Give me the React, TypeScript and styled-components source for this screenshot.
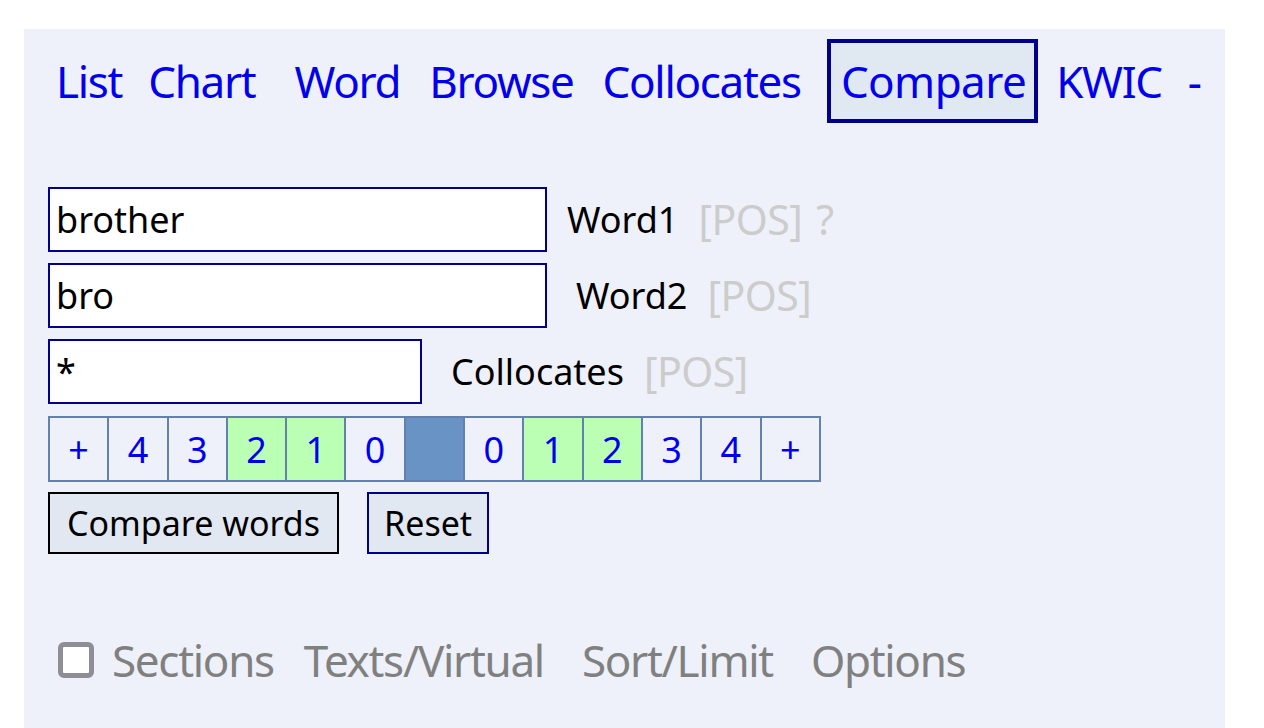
import React from "react";
import styled, { createGlobalStyle } from "styled-components";

const GlobalStyle = createGlobalStyle`
  html, body { margin: 0; padding: 0; background: #ffffff; }
  body { font-family: "Noto Sans", "Open Sans", sans-serif; }
  * { box-sizing: border-box; }
`;

const Panel = styled.div`
  margin: 29px 0 0 24px;
  width: 1201px;
  height: 699px;
  background: #eef1f9;
  padding-top: 10px;
`;

const Nav = styled.nav`
  display: flex;
  align-items: center;
  height: 84px;
  padding-left: 19px;
`;

const NavLink = styled.a<{ $active?: boolean; $extra?: number }>`
  display: flex;
  align-items: center;
  height: 84px;
  padding: ${(p) => (p.$active ? "0 8px 0 10px" : "0 9px")};
  margin-left: ${(p) => p.$extra ?? 0}px;
  border: 4px solid ${(p) => (p.$active ? "#00008b" : "transparent")};
  background: ${(p) => (p.$active ? "#e0e8f2" : "transparent")};
  color: #0000ee;
  font-size: 44px;
  letter-spacing: ${(p) => (p.$active ? "-0.6px" : "-1.3px")};
  text-decoration: none;
  white-space: nowrap;
  line-height: 1;
`;

const Form = styled.div`
  padding-left: 24px;
  margin-top: 64px;
  display: flex;
  flex-direction: column;
`;

const Row = styled.div`
  display: flex;
  align-items: center;
  margin-bottom: 11px;
`;

const TextInput = styled.input<{ $w: number }>`
  width: ${(p) => p.$w}px;
  height: 65px;
  border: 2px solid #00008b;
  background: #ffffff;
  font-family: "Noto Sans", sans-serif;
  font-size: 36px;
  padding: 0 6px;
  color: #000;
  outline: none;
  border-radius: 0;
`;

const Label = styled.span<{ $ml: number }>`
  margin-left: ${(p) => p.$ml}px;
  font-size: 36px;
  color: #000;
  white-space: nowrap;
`;

const Pos = styled.span<{ $ml?: number }>`
  margin-left: ${(p) => p.$ml ?? 20}px;
  font-size: 41px;
  letter-spacing: -0.5px;
  color: #cccccc;
  white-space: nowrap;
  line-height: 1;
`;

const PosTable = styled.table`
  border-collapse: collapse;
  width: 773px;
  height: 66px;
  margin-top: 1px;
  table-layout: fixed;
`;

const PosCell = styled.td<{ $kind: "plain" | "on" | "node" }>`
  border: 2px solid #6282ad;
  text-align: center;
  font-size: 36px;
  color: #0000ee;
  padding: 0;
  background: ${(p) =>
    p.$kind === "on" ? "#bbffb4" : p.$kind === "node" ? "#6a93c5" : "#eef1f9"};
`;

const ButtonRow = styled.div`
  display: flex;
  gap: 28px;
  margin-top: 10px;
`;

const Button = styled.button<{ $primary?: boolean }>`
  height: 62px;
  padding: 0 ${(p) => (p.$primary ? 17 : 15)}px;
  border: 2px solid ${(p) => (p.$primary ? "#000000" : "#00008b")};
  background: #e1e8f2;
  font-family: "Noto Sans", sans-serif;
  font-size: 34px;
  color: #000;
  border-radius: 0;
`;

const Options = styled.div`
  display: flex;
  align-items: center;
  margin-top: 84px;
  padding-left: 34px;
`;

const Check = styled.span`
  width: 36px;
  height: 36px;
  border: 5px solid #8e8d96;
  border-radius: 6px;
  background: #ffffff;
  margin-right: 18px;
`;

const OptionLink = styled.span<{ $ml: number }>`
  margin-left: ${(p) => p.$ml}px;
  font-size: 44px;
  letter-spacing: -1.3px;
  color: #808080;
  white-space: nowrap;
  line-height: 1;
`;

const navItems: { label: string; extra?: number; active?: boolean }[] = [
  { label: "List" },
  { label: "Chart" },
  { label: "Word", extra: 13 },
  { label: "Browse", extra: 3 },
  { label: "Collocates", extra: 3 },
  { label: "Compare", active: true, extra: 13 },
  { label: "KWIC", extra: 5 },
  { label: "-", extra: 0 },
];

const cells: { t: string; k: "plain" | "on" | "node" }[] = [
  { t: "+", k: "plain" },
  { t: "4", k: "plain" },
  { t: "3", k: "plain" },
  { t: "2", k: "on" },
  { t: "1", k: "on" },
  { t: "0", k: "plain" },
  { t: "", k: "node" },
  { t: "0", k: "plain" },
  { t: "1", k: "on" },
  { t: "2", k: "on" },
  { t: "3", k: "plain" },
  { t: "4", k: "plain" },
  { t: "+", k: "plain" },
];

export default function App() {
  return (
    <>
      <GlobalStyle />
      <Panel>
        <Nav>
          {navItems.map((n) => (
            <NavLink key={n.label} href="#" $active={n.active} $extra={n.extra}>
              {n.label}
            </NavLink>
          ))}
        </Nav>
        <Form>
          <Row>
            <TextInput $w={499} defaultValue="brother" />
            <Label $ml={20}>Word1</Label>
            <Pos>[POS]</Pos>
            <Pos $ml={14}>?</Pos>
          </Row>
          <Row>
            <TextInput $w={499} defaultValue="bro" />
            <Label $ml={29}>Word2</Label>
            <Pos>[POS]</Pos>
          </Row>
          <Row>
            <TextInput $w={374} defaultValue="*" />
            <Label $ml={29}>Collocates</Label>
            <Pos>[POS]</Pos>
          </Row>
          <PosTable>
            <tbody>
              <tr>
                {cells.map((c, i) => (
                  <PosCell key={i} $kind={c.k}>
                    {c.t}
                  </PosCell>
                ))}
              </tr>
            </tbody>
          </PosTable>
          <ButtonRow>
            <Button $primary>Compare words</Button>
            <Button>Reset</Button>
          </ButtonRow>
        </Form>
        <Options>
          <Check />
          <OptionLink $ml={0}>Sections</OptionLink>
          <OptionLink $ml={30}>Texts/Virtual</OptionLink>
          <OptionLink $ml={38}>Sort/Limit</OptionLink>
          <OptionLink $ml={38}>Options</OptionLink>
        </Options>
      </Panel>
    </>
  );
}
